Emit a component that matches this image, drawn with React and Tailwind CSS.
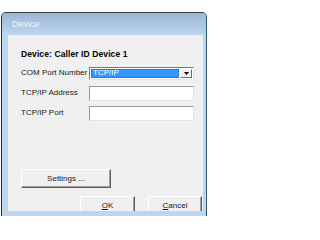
export default function App() {
  const font = { fontFamily: '"Liberation Sans", Arial, sans-serif' }

  return (
    <div className="w-[209px] h-[216px] bg-white overflow-hidden pt-[12px] pl-[1px]" style={font}>
      {/* Window frame */}
      <div className="w-[206px] h-[204px] flex flex-col rounded-t-[5px] border-t border-l border-r border-t-[#3a3a3a] border-l-[#2a2a2a] border-r-[#2d5a6a] bg-[#bdd5ee] overflow-hidden">
        {/* Title bar */}
        <div className="h-[22px] shrink-0 flex items-center pl-[10px] bg-gradient-to-b from-[#9bb6d6] to-[#bdd5ee]">
          <span className="text-[9px] text-[#eef3f9] leading-none">Device</span>
        </div>

        {/* Client area */}
        <div className="flex-1 ml-[6px] mr-[3px] mb-[5px] bg-[#f0f0f0] overflow-hidden pl-[13px] flex flex-col text-[8px] text-[#1a1a1a]">
          <div className="mt-[14px] h-[10px] leading-[10px] font-bold text-[8.5px] tracking-[0.1px] text-black">
            Device: Caller ID Device 1
          </div>

          <div className="mt-[4px] flex flex-col">
            <div className="h-[20px] flex items-center">
              <span className="w-[68px] leading-none">COM Port Number</span>
              <div className="w-[105px] h-[13px] flex border border-t-[#7a7a7a] border-l-[#7a7a7a] border-b-[#e3e3e3] border-r-[#e3e3e3] bg-white">
                <div className="flex-1 m-[1px] bg-[#3399ff] border border-dotted border-[#6b5320] flex items-center pl-[1px]">
                  <span className="text-white leading-none">TCP/IP</span>
                </div>
                <div className="w-[12px] my-[1px] mr-[1px] bg-[#f0f0f0] border border-t-white border-l-white border-b-[#6d6d6d] border-r-[#6d6d6d] flex items-center justify-center">
                  <svg width="5" height="3" viewBox="0 0 5 3">
                    <path d="M0 0H5L2.5 3Z" fill="#000" />
                  </svg>
                </div>
              </div>
            </div>

            <div className="h-[20px] flex items-center">
              <span className="w-[68px] leading-none">TCP/IP Address</span>
              <div className="w-[105px] h-[15px] bg-white border border-t-[#9a9a9a] border-l-[#9a9a9a] border-b-[#e3e3e3] border-r-[#e3e3e3]" />
            </div>

            <div className="h-[20px] flex items-center">
              <span className="w-[68px] leading-none">TCP/IP Port</span>
              <div className="w-[105px] h-[15px] bg-white border border-t-[#9a9a9a] border-l-[#9a9a9a] border-b-[#e3e3e3] border-r-[#e3e3e3]" />
            </div>
          </div>

          {/* Settings button */}
          <div className="mt-[46px] w-[90px] h-[19px] shrink-0 flex items-center justify-center bg-[#f0f0f0] border border-t-white border-l-white border-b-[#5f5f5f] border-r-[#5f5f5f] shadow-[inset_-1px_-1px_0_#a0a0a0]">
            <span className="leading-none">Settings ...</span>
          </div>

          {/* OK / Cancel, cut off by the frame at the bottom */}
          <div className="mt-[8px] flex shrink-0">
            <div className="ml-[59px] w-[55px] h-[24px] flex justify-center pt-[5px] bg-[#f0f0f0] border border-t-white border-l-white border-b-[#5f5f5f] border-r-[#5f5f5f] shadow-[inset_-1px_-1px_0_#a0a0a0]">
              <span className="leading-none"><span className="underline">O</span>K</span>
            </div>
            <div className="ml-[13px] w-[54px] h-[24px] flex justify-center pt-[5px] bg-[#f0f0f0] border border-t-white border-l-white border-b-[#5f5f5f] border-r-[#5f5f5f] shadow-[inset_-1px_-1px_0_#a0a0a0]">
              <span className="leading-none"><span className="underline">C</span>ancel</span>
            </div>
          </div>
        </div>
      </div>
    </div>
  )
}
